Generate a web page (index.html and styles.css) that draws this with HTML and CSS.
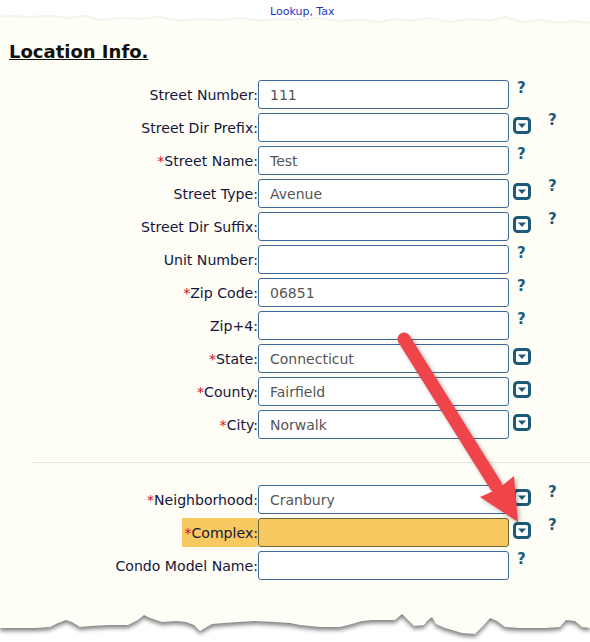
FILE: index.html
```html
<!DOCTYPE html>
<html lang="en">
<head>
    <meta charset="UTF-8">
    <meta name="viewport" content="width=device-width, initial-scale=1.0">
    <title>Location Info.</title>
    <link rel="stylesheet" href="styles.css">
</head>
<body>
    <div class="tear-top">
        <svg width="590" height="28" viewBox="0 0 590 28">
            <path class="tear-white" d="M0 0 H590 V22 L575 20 L560 22 L540 19 L522 21 L505 16 L490 20 L470 18 L450 21 L430 17 L410 20 L395 18 L380 21 L360 19 L340 20 L318 17 L300 19 L280 18 L262 20 L240 17 L220 19 L200 18 L180 20 L160 16 L140 18 L120 17 L100 19 L85 15 L70 17 L50 15 L30 16 L10 15 L0 16 Z"/>
        </svg>
        <div class="crumb">Lookup, Tax</div>
    </div>

    <h2 class="section-title">Location Info.</h2>

    <div class="form">
        <div class="row">
            <label>Street Number:</label>
            <input type="text" value="111">
            <div class="tools"><span class="help">?</span></div>
        </div>
        <div class="row">
            <label>Street Dir Prefix:</label>
            <input type="text" value="">
            <div class="tools">
                <svg class="dd" viewBox="0 0 18 17"><rect x="1.5" y="1.5" width="15" height="14" rx="3"/><path d="M5 6.5 H13 L9 11 Z"/></svg>
                <span class="help wide">?</span>
            </div>
        </div>
        <div class="row">
            <label><span class="req">*</span>Street Name:</label>
            <input type="text" value="Test">
            <div class="tools"><span class="help">?</span></div>
        </div>
        <div class="row">
            <label>Street Type:</label>
            <input type="text" value="Avenue">
            <div class="tools">
                <svg class="dd" viewBox="0 0 18 17"><rect x="1.5" y="1.5" width="15" height="14" rx="3"/><path d="M5 6.5 H13 L9 11 Z"/></svg>
                <span class="help wide">?</span>
            </div>
        </div>
        <div class="row">
            <label>Street Dir Suffix:</label>
            <input type="text" value="">
            <div class="tools">
                <svg class="dd" viewBox="0 0 18 17"><rect x="1.5" y="1.5" width="15" height="14" rx="3"/><path d="M5 6.5 H13 L9 11 Z"/></svg>
                <span class="help wide">?</span>
            </div>
        </div>
        <div class="row">
            <label>Unit Number:</label>
            <input type="text" value="">
            <div class="tools"><span class="help">?</span></div>
        </div>
        <div class="row">
            <label><span class="req">*</span>Zip Code:</label>
            <input type="text" value="06851">
            <div class="tools"><span class="help">?</span></div>
        </div>
        <div class="row">
            <label>Zip+4:</label>
            <input type="text" value="">
            <div class="tools"><span class="help">?</span></div>
        </div>
        <div class="row">
            <label><span class="req">*</span>State:</label>
            <input type="text" value="Connecticut">
            <div class="tools">
                <svg class="dd" viewBox="0 0 18 17"><rect x="1.5" y="1.5" width="15" height="14" rx="3"/><path d="M5 6.5 H13 L9 11 Z"/></svg>
            </div>
        </div>
        <div class="row">
            <label><span class="req">*</span>County:</label>
            <input type="text" value="Fairfield">
            <div class="tools">
                <svg class="dd" viewBox="0 0 18 17"><rect x="1.5" y="1.5" width="15" height="14" rx="3"/><path d="M5 6.5 H13 L9 11 Z"/></svg>
            </div>
        </div>
        <div class="row">
            <label><span class="req">*</span>City:</label>
            <input type="text" value="Norwalk">
            <div class="tools">
                <svg class="dd" viewBox="0 0 18 17"><rect x="1.5" y="1.5" width="15" height="14" rx="3"/><path d="M5 6.5 H13 L9 11 Z"/></svg>
            </div>
        </div>
    </div>

    <div class="divider"></div>

    <div class="form">
        <div class="row">
            <label><span class="req">*</span>Neighborhood:</label>
            <input type="text" value="Cranbury">
            <div class="tools">
                <svg class="dd" viewBox="0 0 18 17"><rect x="1.5" y="1.5" width="15" height="14" rx="3"/><path d="M5 6.5 H13 L9 11 Z"/></svg>
                <span class="help wide">?</span>
            </div>
        </div>
        <div class="row">
            <label class="missing"><span class="req">*</span>Complex:</label>
            <input type="text" class="missing" value="">
            <div class="tools">
                <svg class="dd" viewBox="0 0 18 17"><rect x="1.5" y="1.5" width="15" height="14" rx="3"/><path d="M5 6.5 H13 L9 11 Z"/></svg>
                <span class="help wide">?</span>
            </div>
        </div>
        <div class="row">
            <label>Condo Model Name:</label>
            <input type="text" value="">
            <div class="tools"><span class="help">?</span></div>
        </div>
    </div>

    <div class="tear-bottom">
        <svg width="590" height="62" viewBox="0 0 590 62">
            <path class="tear-paper" d="M0 0 H590 V48 L582 47 L575 41 L566 40 L560 47 L545 48 L520 48 L505 47 L497 41 L490 38 L484 45 L475 54 L462 53 L452 50 L445 48 L436 44 L432 37 L428 40 L424 45 L414 46 L406 38 L402 34 L395 40 L385 40 L372 40 L362 41 L352 44 L340 47 L320 47 L300 45 L290 43 L275 42 L255 41 L238 42 L224 43 L212 44 L205 48 L200 51 L194 45 L186 42 L176 41 L162 42 L150 38 L144 35 L138 40 L128 45 L110 45 L90 46 L80 47 L72 42 L66 40 L58 43 L50 47 L35 48 L20 48 L0 48 Z"/>
        </svg>
    </div>

    <svg class="callout" width="590" height="642" viewBox="0 0 590 642">
        <line x1="404" y1="339" x2="496" y2="486" />
        <path d="M514 476 L518 522 L480 497 L498 489 Z" />
    </svg>
</body>
</html>
```

FILE: styles.css
```css
body {
    margin: 0;
    height: 642px;
    overflow: hidden;
    position: relative;
    background-color: #fefdf6;
    font-family: "DejaVu Sans", Verdana, sans-serif;
    color: #15153a;
}
.tear-top {
    position: relative;
    height: 28px;
}
.tear-top svg {
    display: block;
}
.tear-white {
    fill: #ffffff;
    filter: drop-shadow(0 1px 1px rgba(0, 0, 0, 0.08));
}
.crumb {
    position: absolute;
    top: 5px;
    left: 270px;
    font-size: 11px;
    line-height: 13px;
    color: #1f35c8;
}
.section-title {
    margin: 13px 0 17px 9px;
    font-size: 18px;
    line-height: 22px;
    font-weight: bold;
    color: #111;
    text-decoration: underline;
}
.form {
    display: flex;
    flex-direction: column;
    gap: 4px;
}
.row {
    display: grid;
    grid-template-columns: 258px 251px 1fr;
    height: 29px;
}
.row label {
    justify-self: end;
    display: flex;
    align-items: center;
    padding-left: 2px;
    font-size: 14.1px;
}
.row label.missing {
    background-color: #f8c960;
}
.req {
    color: #d0101e;
}
.row input {
    box-sizing: border-box;
    width: 251px;
    height: 29px;
    margin: 0;
    padding: 0 0 0 11px;
    border: 1px solid #3a6aa0;
    border-radius: 3px;
    background-color: #ffffff;
    font-family: "DejaVu Sans", Verdana, sans-serif;
    font-size: 14px;
    color: #555555;
    outline: none;
}
.row input.missing {
    background-color: #f8c960;
    border-color: #6b6636;
}
.tools {
    display: flex;
    align-items: flex-start;
}
.dd {
    width: 18px;
    height: 17px;
    margin: 4px 0 0 4px;
}
.dd rect {
    fill: #ffffff;
    stroke: #1b5a78;
    stroke-width: 3;
}
.dd path {
    fill: #1b5a78;
}
.help {
    margin: 1px 0 0 8px;
    font-size: 15px;
    line-height: 15px;
    font-weight: bold;
    color: #1b5c7e;
}
.help.wide {
    margin: 0 0 0 17px;
}
.divider {
    margin: 23px 0 22px 32px;
    border-top: 1px solid #e6e6e3;
}
.tear-bottom {
    position: absolute;
    left: 0;
    bottom: 0;
    width: 590px;
    height: 62px;
    background-color: #ffffff;
}
.tear-bottom svg {
    display: block;
}
.tear-paper {
    fill: #fefdf6;
    filter: drop-shadow(0 3px 2px rgba(0, 0, 0, 0.5));
}
.callout {
    position: absolute;
    top: 0;
    left: 0;
    pointer-events: none;
    filter: drop-shadow(2px 2px 2px rgba(0, 0, 0, 0.3));
}
.callout line {
    stroke: #f0444b;
    stroke-width: 13;
    stroke-linecap: round;
}
.callout path {
    fill: #f0444b;
}
```
